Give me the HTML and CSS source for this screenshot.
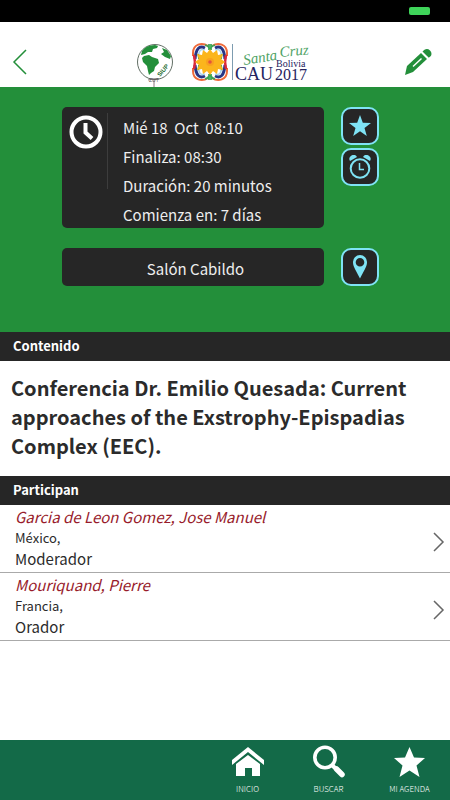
FILE: index.html
```
<!DOCTYPE html>
<html lang="es">
<head>
    <meta charset="UTF-8">
    <meta name="viewport" content="width=device-width, initial-scale=1.0">
    <title>CAU 2017</title>
    <link rel="stylesheet" href="styles.css">
</head>
<body>
    <div class="status-bar"><span class="battery"></span></div>

    <header class="header">
        <button class="header-btn" type="button" aria-label="Volver">
            <svg width="16" height="28" viewBox="0 0 16 28"><path d="M15 2 3 14l12 12" fill="none" stroke="#238f3a" stroke-width="1.5"/></svg>
        </button>
        <svg class="logo" width="178" height="48" viewBox="0 0 178 48" role="img" aria-label="Santa Cruz Bolivia CAU 2017">
            <!-- globe -->
            <circle cx="20" cy="23" r="17.5" fill="#fff" stroke="#3a4a3e" stroke-width="0.8"/>
            <g fill="#238f3a">
                <path d="M7 12Q11 6 20 6l3 1-1 2-4 1-1 3-4 0-3 2-4 1z"/>
                <path d="M27 9l5 2 4 6-1 3-5-2-4-3 3-2z"/>
                <path d="M9 17l5-1 3 2 6 2 1 4-4 4-1 4-3 2-2 2-1-4-1-5-4-4-1-4z"/>
            </g>
            <text class="logo-globe" transform="translate(25 38) rotate(-50)">SIUP</text>
            <path d="M13 41l5-1h6M19 40v8" fill="none" stroke="#6b5560" stroke-width="0.8"/>
            <text class="logo-tiny" x="14" y="43">ZUT</text>
            <!-- emblem -->
            <g fill="none" stroke-width="2">
                <g id="corner">
                    <path d="M73 7C67 3 58 5 58 14v3" stroke="#ef6a3a"/>
                    <path d="M70 9C64 6 61 10 60 20" stroke="#283583" stroke-width="3"/>
                    <path d="M70 11C65 9 63 13 64 20" stroke="#a9d5ec" stroke-width="1.5"/>
                    <path d="M70 6q4 1 5 5M74 5v6" stroke="#3aa655" stroke-width="1.8"/>
                    <path d="M59 16l1 7" stroke="#d9293c" stroke-width="2.5"/>
                    <path d="M63 15l1 5" stroke="#3aa655" stroke-width="1.5"/>
                </g>
                <use href="#corner" transform="matrix(-1 0 0 1 150 0)"/>
                <use href="#corner" transform="matrix(1 0 0 -1 0 46)"/>
                <use href="#corner" transform="matrix(-1 0 0 -1 150 46)"/>
            </g>
            <path d="M75 10l3 4 4-3 1 5 5-1-2 5 4 3-4 3 2 5-5-1-1 5-4-3-3 4-3-4-4 3-1-5-5 1 2-5-4-3 4-3-2-5 5 1 1-5 4 3z" fill="#fbb51c"/>
            <circle cx="75" cy="23" r="4" fill="#f9a01f"/>
            <circle cx="75" cy="23" r="1.8" fill="#e2553b"/>
            <path d="M97.500 5v36" stroke="#7d9cb0"/>
            <!-- wordmark -->
            <text class="logo-script" transform="translate(109 26) rotate(-9)">Santa</text>
            <text class="logo-script" transform="translate(145 18) rotate(-5)">Cruz</text>
            <text class="logo-name" x="100" y="41">CAU</text>
            <text class="logo-place" x="141" y="28">Bolivia</text>
            <text class="logo-year" x="140" y="41">2017</text>
        </svg>
        <button class="header-btn" type="button" aria-label="Notas">
            <svg width="28" height="28" viewBox="0 0 28 28">
                <path fill="#238f3a" d="M1 27l2-9L17 5l6 6L9 24z"/>
                <path d="M9 18.500L17.500 10.500" stroke="#fff" stroke-width="1.500"/>
                <path fill="#238f3a" d="M18.500 3.500l2-1.800q3-1.700 5.500.8t.8 5.500l-2 1.800z"/>
            </svg>
        </button>
    </header>

    <section class="hero">
        <div class="card time-card">
            <div class="clock">
                <svg width="34" height="34" viewBox="0 0 34 34" fill="none" stroke="#fff">
                    <circle cx="17" cy="17" r="14.500" stroke-width="4"/>
                    <path d="M16.500 8v9.500l6.500 6" stroke-width="4"/>
                </svg>
            </div>
            <div class="times">
                <p>Mié 18&nbsp; Oct&nbsp; 08:10</p>
                <p>Finaliza: 08:30</p>
                <p>Duración: 20 minutos</p>
                <p>Comienza en: 7 días</p>
            </div>
        </div>
        <div class="actions">
            <button class="action" type="button" aria-label="Agregar a mi agenda">
                <svg width="24" height="24" viewBox="0 0 24 24"><path fill="#7fe3f5" d="M12 1l2.800 7.800 8.200.2-6.500 5 2.300 8L12 17.300 5.200 22l2.300-8L1 9l8.200-.2z"/></svg>
            </button>
            <button class="action" type="button" aria-label="Alarma">
                <svg width="24" height="24" viewBox="0 0 24 24" fill="none" stroke="#7fe3f5">
                    <circle cx="12" cy="13.500" r="9.300" stroke-width="2"/>
                    <path d="M11.500 8v6.500H16" stroke-width="1.500"/>
                    <path d="M2 6a4 4 0 0 1 7-4zM22 6a4 4 0 0 0-7-4z" fill="#7fe3f5" stroke="none"/>
                </svg>
            </button>
        </div>
        <div class="card room">Salón Cabildo</div>
        <button class="action" type="button" aria-label="Ubicación">
            <svg width="24" height="24" viewBox="0 0 24 24"><path fill="#7fe3f5" fill-rule="evenodd" d="M12 0a7 7 0 0 1 7 7.500C19 12 15 17 12 23.500 9 17 5 12 5 7.500A7 7 0 0 1 12 0zm0 3a4.300 4.300 0 1 0 0 8.600A4.300 4.300 0 0 0 12 3z"/></svg>
        </button>
    </section>

    <main class="content">
        <h2 class="section-title">Contenido</h2>
        <h1 class="talk-title">Conferencia Dr. Emilio Quesada: Current approaches of the Exstrophy-Epispadias Complex (EEC).</h1>
        <h2 class="section-title">Participan</h2>
        <ul class="people">
            <li>
                <a class="person" href="#">
                    <span class="person-info">
                        <span class="name">Garcia de Leon Gomez, Jose Manuel</span>
                        <span class="country">México,</span>
                        <span class="role">Moderador</span>
                    </span>
                    <svg class="chevron" width="12" height="20" viewBox="0 0 12 20"><path d="M1 1l9 9-9 9" fill="none" stroke="#666" stroke-width="1.500"/></svg>
                </a>
            </li>
            <li>
                <a class="person" href="#">
                    <span class="person-info">
                        <span class="name">Mouriquand, Pierre</span>
                        <span class="country">Francia,</span>
                        <span class="role">Orador</span>
                    </span>
                    <svg class="chevron" width="12" height="20" viewBox="0 0 12 20"><path d="M1 1l9 9-9 9" fill="none" stroke="#666" stroke-width="1.500"/></svg>
                </a>
            </li>
        </ul>
    </main>

    <nav class="tab-bar">
        <a class="tab" href="#">
            <svg width="34" height="34" viewBox="0 0 34 34" fill="#fff"><path d="M1 15L17 2l16 13v5L17 7 1 20z"/><path d="M5 19L17 10l12 9v12h-8v-8h-7v8H5z"/></svg>
            <span>INICIO</span>
        </a>
        <a class="tab" href="#">
            <svg width="34" height="34" viewBox="0 0 34 34" fill="none" stroke="#fff"><circle cx="13" cy="12.500" r="10.200" stroke-width="3.600"/><path d="M20 20l3 3" stroke-width="4"/><path d="M24.500 24l5.500 5.500" stroke-width="5.500" stroke-linecap="round"/></svg>
            <span>BUSCAR</span>
        </a>
        <a class="tab" href="#">
            <svg width="34" height="34" viewBox="0 0 34 34" fill="#fff"><path d="M16.500 2l4.500 10.500 11 .5-8.500 7.500 3 11.500-10-6.500L6.500 32l3-11.500L1 13l11-.5z"/></svg>
            <span>MI AGENDA</span>
        </a>
    </nav>
</body>
</html>
```
FILE: styles.css
```
* {
    box-sizing: border-box;
}
body {
    font-family: "Noto Sans CJK SC", "Noto Sans", sans-serif;
    background-color: #fff;
    color: #2b2b2b;
    display: flex;
    flex-direction: column;
    min-height: 100vh;
    margin: 0;
}
h1, h2, p, ul {
    margin: 0;
    padding: 0;
}
button {
    border: none;
    padding: 0;
    background: none;
    cursor: pointer;
}
a {
    color: inherit;
    text-decoration: none;
}
svg {
    display: block;
    flex-shrink: 0;
}

/* top */
.status-bar {
    display: flex;
    justify-content: flex-end;
    padding: 7px 20px;
    background-color: #000;
}
.battery {
    width: 21px;
    height: 8px;
    border-radius: 2px;
    background-color: #3fd45a;
}
.header {
    display: flex;
    justify-content: space-between;
    align-items: flex-end;
    padding: 17px 18px 0 11px;
}
.header-btn {
    min-width: 28px;
    padding-bottom: 11px;
}
.logo {
    margin-left: 4px;
}
.logo-globe {
    font: bold 6px "Liberation Sans", sans-serif;
    fill: #1c6b2c;
}
.logo-tiny {
    font: 5px "Liberation Sans", sans-serif;
    fill: #555;
}
.logo-script {
    font: italic 15px "Liberation Serif", serif;
    fill: #4fa366;
}
.logo-name,
.logo-place,
.logo-year {
    font: 18px "Liberation Serif", serif;
    fill: #25235e;
}
.logo-place {
    font-size: 10px;
}
.logo-year {
    font-size: 16px;
}

/* schedule */
.hero {
    display: grid;
    grid-template-columns: 1fr 38px;
    gap: 20px 17px;
    padding: 20px 71px 46px 62px;
    background-color: #238f3a;
}
.card {
    border-radius: 5px;
    background-color: #262626;
    color: #eee;
    font-size: 15px;
}
.time-card {
    display: flex;
    gap: 15px;
    height: 121px;
    padding: 6px 7px;
}
.clock {
    height: 76px;
    padding: 2px 4px 0 0;
    border-right: 1px solid #3d3d3d;
}
.times p {
    line-height: 29px;
}
.room {
    display: flex;
    align-items: center;
    justify-content: center;
    padding-top: 3px;
    padding-left: 5px;
}
.actions {
    display: flex;
    flex-direction: column;
    gap: 3px;
}
.action {
    display: flex;
    align-items: center;
    justify-content: center;
    width: 38px;
    height: 38px;
    border: 2px solid #7fe3f5;
    border-radius: 10px;
    background-color: #262626;
}

/* content */
.content {
    flex: 1;
}
.section-title {
    padding: 0 13px 2px;
    background-color: #262626;
    color: #fff;
    font-size: 13px;
    line-height: 27px;
}
.talk-title {
    padding: 12px 11px 16px;
    font-size: 20px;
    line-height: 29px;
}
.people {
    list-style: none;
}
.person {
    display: flex;
    align-items: center;
    justify-content: space-between;
    padding: 2px 5px 3px 15px;
    border-bottom: 1px solid #aaa;
}
.person-info {
    display: flex;
    flex-direction: column;
    gap: 1px;
    font-size: 15px;
    line-height: 20px;
}
.name {
    color: #981b2b;
    font-style: italic;
}
.country {
    font-size: 13px;
}
.chevron {
    margin-top: 8px;
}

/* bottom tabs */
.tab-bar {
    display: flex;
    justify-content: flex-end;
    padding: 5px 0 3px;
    background-color: #136a48;
    color: #fff;
}
.tab {
    display: flex;
    flex-direction: column;
    align-items: center;
    gap: 2px;
    width: 18%;
    font-size: 8px;
    font-weight: 300;
    line-height: 16px;
}
```
